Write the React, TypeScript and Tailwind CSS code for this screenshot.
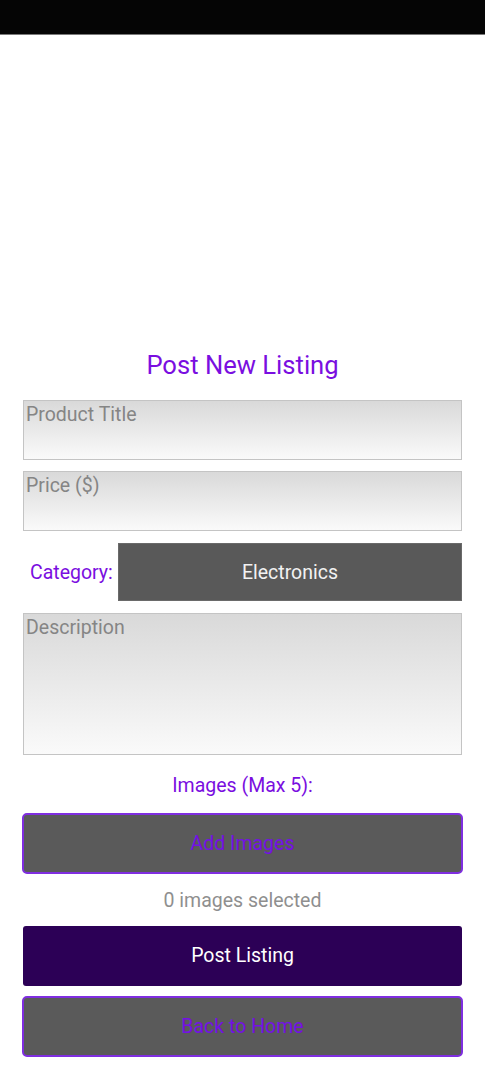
import React from "react";

function Field({ label, h }: { label: string; h: string }) {
  return (
    <div
      className={`mx-[23px] ${h} border border-[#c4c4c4] bg-gradient-to-b from-[#d9d9d9] to-[#fafafa] px-[2px] pt-[2px] text-[19.5px] leading-[23px] text-[#858585]`}
    >
      {label}
    </div>
  );
}

export default function App() {
  return (
    <div className="w-[485px] min-h-[1080px] bg-white" style={{ fontFamily: "Roboto, 'Noto Sans', sans-serif" }}>
      <div className="h-[35px] bg-[#050505] border-b border-[#7a7a7a]" />
      <div className="pt-[315px] flex flex-col">
        <div className="h-[30px] text-center text-[25.6px] leading-[30px] text-[#7a0ee0]">Post New Listing</div>
        <div className="mt-[20px] flex flex-col">
          <Field label="Product Title" h="h-[60px]" />
          <div className="mt-[11px]">
            <Field label="Price ($)" h="h-[60px]" />
          </div>
          <div className="mt-[12px] mx-[23px] flex items-center h-[58px]">
            <div className="w-[95px] pl-[7px] text-[19.5px] leading-[23px] text-[#7a0ee0]">Category:</div>
            <div className="flex-1 h-[58px] bg-[#595959] border border-[#6a6a6a] flex items-center justify-center pt-[2px] text-[19.5px] text-[#f2f2f2]">
              Electronics
            </div>
          </div>
          <div className="mt-[12px]">
            <Field label="Description" h="h-[142px]" />
          </div>
          <div className="mt-[19px] h-[23px] text-center text-[19.5px] leading-[23px] text-[#7a0ee0]">Images (Max 5):</div>
          <div className="mt-[16px] mx-[22px] h-[61px] rounded-[5px] border-2 border-[#7f2ee0] bg-[#5a5a5a] flex items-center justify-center text-[19.5px] text-[#7410e6]">
            Add Images
          </div>
          <div className="mt-[15px] h-[23px] text-center text-[19.5px] leading-[23px] text-[#8f8f8f]">0 images selected</div>
          <div className="mt-[14px] mx-[23px] h-[60px] rounded-[3px] bg-[#2c0056] flex items-center justify-center text-[19.5px] text-white">
            Post Listing
          </div>
          <div className="mt-[10px] mx-[22px] h-[61px] rounded-[5px] border-2 border-[#7f2ee0] bg-[#5a5a5a] flex items-center justify-center text-[19.5px] text-[#7410e6]">
            Back to Home
          </div>
        </div>
      </div>
    </div>
  );
}
